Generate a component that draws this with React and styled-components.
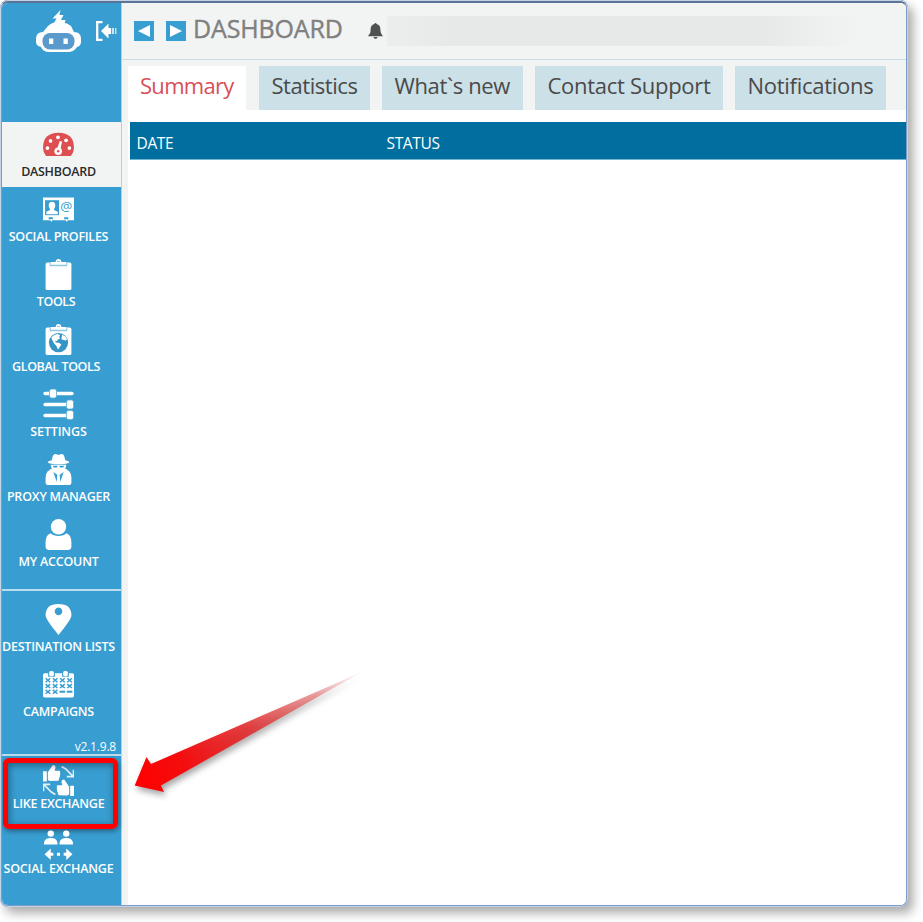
import styled, { createGlobalStyle } from "styled-components";

const GlobalStyle = createGlobalStyle`
  * {
    box-sizing: border-box;
  }
  body {
    margin: 0;
    min-height: 100vh;
    background: #fff;
    font-family: "Open Sans", "Noto Sans", sans-serif;
  }
`;

const mainItems = [
  { label: "DASHBOARD", icon: <GaugeIcon />, active: true, spacing: -0.28 },
  { label: "SOCIAL PROFILES", icon: <ProfilesIcon />, spacing: -0.26 },
  { label: "TOOLS", icon: <ClipboardIcon />, shift: -5, spacing: -0.4 },
  { label: "GLOBAL TOOLS", icon: <GlobeBoardIcon />, shift: -5, spacing: -0.4 },
  { label: "SETTINGS", icon: <SlidersIcon />, spacing: -0.15 },
  { label: "PROXY MANAGER", icon: <SpyIcon />, spacing: -0.2 },
  { label: "MY ACCOUNT", icon: <UserIcon />, spacing: -0.2 },
];

const listItems = [
  { label: "DESTINATION LISTS", icon: <PinIcon />, spacing: -0.25 },
  { label: "CAMPAIGNS", icon: <CalendarIcon />, spacing: -0.25 },
];

const exchangeItems = [
  { label: "LIKE EXCHANGE", icon: <LikesIcon />, low: true, spacing: -0.25, marked: true },
  { label: "SOCIAL EXCHANGE", icon: <PeopleIcon />, low: true, spacing: -0.2 },
];

const tabs = [
  { label: "Summary", width: 118, gap: 13, active: true, spacing: -0.7 },
  { label: "Statistics", width: 111, gap: 12, spacing: -0.45 },
  { label: "What`s new", width: 141, gap: 12, spacing: -0.35 },
  { label: "Contact Support", width: 188, gap: 12, spacing: -0.28 },
  { label: "Notifications", width: 151, gap: 0, spacing: -0.28 },
];

function App() {
  return (
    <>
      <GlobalStyle />
      <Window>
        <Sidebar>
          <Brand>
            <RobotLogo />
            <CollapseIcon />
          </Brand>
          <NavGroup $height={469}>
            {mainItems.map((item) => (
              <NavItem key={item.label} {...item} />
            ))}
          </NavGroup>
          <NavGroup $height={165} $top={6}>
            {listItems.map((item) => (
              <NavItem key={item.label} {...item} />
            ))}
            <Version>v2.1.9.8</Version>
          </NavGroup>
          <NavGroup $last>
            {exchangeItems.map((item) => (
              <NavItem key={item.label} {...item} />
            ))}
          </NavGroup>
        </Sidebar>
        <Main>
          <Header>
            <ArrowButton>
              <svg width="20" height="20" viewBox="0 0 20 20">
                <path d="M4 10 16 4v12z" fill="#fff" />
              </svg>
            </ArrowButton>
            <ArrowButton>
              <svg width="20" height="20" viewBox="0 0 20 20">
                <path d="M16 10 4 4v12z" fill="#fff" />
              </svg>
            </ArrowButton>
            <Title>DASHBOARD</Title>
            <BellIcon />
            <BlurredLine />
          </Header>
          <Tabs>
            {tabs.map((tab) => (
              <Tab
                key={tab.label}
                $active={tab.active}
                $width={tab.width}
                $gap={tab.gap}
                $spacing={tab.spacing}
              >
                {tab.label}
              </Tab>
            ))}
          </Tabs>
          <Content>
            <TableHead>
              <span>DATE</span>
              <span>STATUS</span>
            </TableHead>
          </Content>
        </Main>
      </Window>
      <Pointer />
    </>
  );
}

export default App;

function NavItem({ label, icon, active, low, shift = 0, spacing, marked }) {
  return (
    <Item $active={active} $low={low}>
      <IconBox>{icon}</IconBox>
      <Label $shift={shift} $spacing={spacing}>
        {label}
      </Label>
      {marked && <Highlight />}
    </Item>
  );
}

function RobotLogo() {
  return (
    <svg width="46" height="43" viewBox="0 0 46 43">
      <path d="M24.500 0 16.500 8.500h4L17.500 14h11l1-4h-4.500l2.500-5h-4z" fill="#fff" />
      <path
        d="M12 16Q16 12.500 19 12.500h8q4 0 8 3.500l3 6q7 0 7 7v3q0 4-4 5-3 5-9 5H13q-6 0-8-5-5-1-5-5v-3q0-7 7-7z"
        fill="#fff"
      />
      <rect x="6.500" y="23" width="32" height="16.500" rx="7.500" fill="#5a99cc" />
      <rect x="13" y="28.500" width="4.300" height="5.500" fill="#fff" />
      <rect x="27.500" y="28.500" width="4.300" height="5.500" fill="#fff" />
    </svg>
  );
}

function CollapseIcon() {
  return (
    <svg width="21" height="20" viewBox="0 0 21 20">
      <path d="M6.500 1.200H1.200v17.600h5.300" stroke="#fff" strokeWidth="2.300" fill="none" />
      <path d="M5 10 12.500 2.500v4.500H15v6h-2.500v4.500z" fill="#fff" />
      <path d="M15.800 7h2.200v6h-2.200zM19 7h1.400v6H19z" fill="#fff" opacity=".75" />
    </svg>
  );
}

function BellIcon() {
  return (
    <Bell width="15" height="16" viewBox="0 0 15 16">
      <path
        d="M7.500 0q1 0 1.100 1.100 3.800 1 3.800 5.400 0 3.500 1 4.500t1.400 2.300H.2q.2-1.300 1.400-2.300t1-4.500q0-4.400 3.800-5.400Q6.500 0 7.500 0zM5.500 13.900h4q-.3 1.900-2 1.900t-2-1.900z"
        fill="#505050"
      />
    </Bell>
  );
}

function GaugeIcon() {
  return (
    <svg viewBox="0 0 30 30">
      <path d="M3 26.200Q0 22.500 0 18.300 0 3.600 15 3.600t15 14.700q0 4.200-3 7.900z" fill="#de4f52" />
      <g fill="#fff">
        <circle cx="4.300" cy="18.500" r="1.800" />
        <circle cx="7.300" cy="11.500" r="1.800" />
        <circle cx="14.500" cy="8" r="1.800" />
        <circle cx="22.300" cy="11" r="1.800" />
        <circle cx="25.500" cy="18.500" r="1.800" />
        <circle cx="14.700" cy="21.500" r="3.700" />
        <path d="m13.500 20 2.700-8.500 2.200.5-1.700 9z" />
      </g>
      <circle cx="14.700" cy="21.500" r="1.200" fill="#de4f52" />
    </svg>
  );
}

function ProfilesIcon() {
  return (
    <svg viewBox="0 0 30 30">
      <path d="M0 3.500h30v22h-6l-1 1.500-1-1.500H9l-1 1.500-1-1.500H0z" fill="#fff" />
      <rect x="2" y="6" width="13.500" height="14.500" fill="#389dd0" />
      <path
        d="M8.700 7.500q3.200 0 3.200 3.600 0 2-1.300 3.300v1.200l3.700 1.600v2.500H3.200v-2.500l3.600-1.600v-1.200q-1.300-1.300-1.300-3.300 0-3.600 3.200-3.600z"
        fill="#fff"
      />
      <path d="M5.500 23.500h4M20.500 23.500h4" stroke="#389dd0" strokeWidth="2" />
      <text x="16.800" y="16.500" fontFamily="Open Sans, sans-serif" fontSize="13" fill="#389dd0">
        @
      </text>
    </svg>
  );
}

function Board() {
  return (
    <>
      <rect x="2.500" y="3.500" width="25" height="26.500" rx="1.500" fill="#fff" />
      <path d="M6.500 3h17v4h-17z" fill="#8fc7e5" />
      <path d="M7.500 5.600V2.800h4.700Q12.400 0 15 0t2.800 2.800h4.700v2.800z" fill="#fff" />
      <path d="M13.500 1.800h3v1h-3z" fill="#8fc7e5" />
    </>
  );
}

function ClipboardIcon() {
  return (
    <svg viewBox="0 0 30 30">
      <Board />
    </svg>
  );
}

function GlobeBoardIcon() {
  return (
    <svg viewBox="0 0 30 30">
      <Board />
      <circle cx="15" cy="18" r="9.300" fill="#3594c6" />
      <path
        d="M8 13q2.500-3 6-3.300l2.500 1-.8 2 .8 1.300-2.300 1.200-.6 1.600-1.800-.5.500 1.500 3.200.4 2.300 2-1.800 2.300-1.500 2.300-1.500-3.600-2-2.200-1.800-3zM18.500 10.500l3.300 1.700 1.500 3-1.800.8-2.200-.8-1.500-.4.300-2z"
        fill="#fff"
      />
    </svg>
  );
}

function SlidersIcon() {
  return (
    <svg viewBox="0 0 31 31">
      <path d="M2 4.500h27M2 15.500h25M2 26.500h25" stroke="#fff" strokeWidth="3.400" strokeLinecap="round" />
      <g fill="#fff" stroke="#5aaed9" strokeWidth=".8">
        <rect x="6.500" y="0" width="7" height="9" rx="2" />
        <rect x="23.500" y="11" width="7" height="9" rx="2" />
        <rect x="23.500" y="21.500" width="7" height="9" rx="2" />
      </g>
    </svg>
  );
}

function SpyIcon() {
  return (
    <svg viewBox="0 0 30 30">
      <g fill="#fff">
        <path d="M8.500 6Q9.500 0 11.500 0q1.500 0 3.500 1 2-1 3.500-1 2 0 3 6 4 .8 4 2.300Q23.500 10 15 10T4.500 8.300Q4.500 6.800 8.500 6z" />
        <path d="M7.500 10.500h15q-.3 4.500-3.500 6h-8q-3.200-1.500-3.500-6z" />
        <path d="M7.500 14.500h15l3 2.500q2 2 2 6v4.500q0 2.500-3 2.500h-19q-3 0-3-2.500V23q0-4 2-6z" />
      </g>
      <path d="M9.500 11.300h4.800l-.8 1.700h-3zM15.700 11.300h4.800l-1 1.700h-3z" fill="#389dd0" />
      <path d="m10 17.500 3.300 9.500.5-7zM20 17.500 16.700 27l-.5-7z" fill="#389dd0" />
    </svg>
  );
}

function UserIcon() {
  return (
    <svg viewBox="0 0 30 30">
      <circle cx="15" cy="7.500" r="7.400" fill="#fff" />
      <path
        d="M7.500 13.800Q10 16.500 15 16.500t7.500-2.700q5 1.500 5 9v3.500Q27.500 30 24 30H6q-3.500 0-3.500-3.700v-3.500q0-7.500 5-9z"
        fill="#fff"
      />
    </svg>
  );
}

function PinIcon() {
  return (
    <svg viewBox="0 0 30 30">
      <path
        fillRule="evenodd"
        d="M15 0q12.500 0 12.500 11Q27.500 15 15 30 2.500 15 2.500 11 2.500 0 15 0zm0 3.500a3.700 3.700 0 1 0 .01 0z"
        fill="#fff"
      />
    </svg>
  );
}

function CalendarIcon() {
  const cells = [0, 1, 2, 3].flatMap((col) =>
    [0, 1, 2].map((row) => ({ col, row, x: 2.5 + col * 7, y: 9 + row * 5.6 }))
  );
  return (
    <svg viewBox="0 0 30 30">
      <rect x="0" y="4" width="30" height="23.500" rx="1.500" fill="#fff" />
      <path d="M5 3h6.500v4.500H5zM18.500 3H25v4.500h-6.500z" fill="#389dd0" />
      <rect x="6" y="2" width="4.500" height="5" rx="1.500" fill="#fff" />
      <rect x="19.500" y="2" width="4.500" height="5" rx="1.500" fill="#fff" />
      {cells.map(({ col, row, x, y }) =>
        row === 2 && col > 1 ? (
          <path key={`${col}-${row}`} d={`M${x - 0.5} ${y + 1.8}h5.500`} stroke="#389dd0" strokeWidth="2" />
        ) : (
          <path
            key={`${col}-${row}`}
            d={`M${x} ${y}l4.500 3.800M${x + 4.5} ${y}l-4.500 3.800`}
            stroke="#389dd0"
            strokeWidth="1.400"
          />
        )
      )}
    </svg>
  );
}

function LikesIcon() {
  return (
    <svg viewBox="0 0 30 30">
      <g fill="#fff">
        <path d="M0 6h3.700v10H0z" />
        <path d="M4.700 7 9.500 0q3 0 2.500 3l-.7 2.500H16q1.300 1 .4 2.300.8 1.200-.1 2.400.5 1.200-.6 2.200.3 1.500-1 2.800l-8 .3-2-1z" />
        <path d="M26.300 20H30v10h-3.700z" />
        <path d="M25.300 21 20.500 14q-3 0-2.500 3l.7 2.500H14q-1.300 1-.4 2.300-.8 1.200.1 2.400-.5 1.200.6 2.200-.3 1.500 1 2.800l8 .3 2-1z" />
      </g>
      <path
        d="m18 1.500 4 2.300 7 7.200M23 11.300h6.500V4.500M12 28.500l-4-2.300L1 19M7 18.700H.5v6.800"
        stroke="#fff"
        strokeWidth="1.600"
        fill="none"
        opacity=".85"
      />
    </svg>
  );
}

function PeopleIcon() {
  return (
    <svg viewBox="0 0 30 30">
      <g fill="#fff">
        <circle cx="7.500" cy="3.500" r="3.100" />
        <circle cx="22.500" cy="3.500" r="3.100" />
        <path d="M1 14v-2q1-4.200 6.500-4.200T14 12v2zM16 14v-2q1-4.200 6.500-4.200T29 12v2zM1.500 23.500l6-5.500v4H10v3H7.500v4zM28.500 23.500l-6-5.500v4H20v3h2.500v4zM13.500 22h3v3h-3z" />
      </g>
    </svg>
  );
}

function Pointer() {
  return (
    <PointerSvg width="250" height="140" viewBox="0 0 250 140">
      <defs>
        <linearGradient id="fade" gradientUnits="userSpaceOnUse" x1="15" y1="120" x2="240" y2="13">
          <stop offset="0" stopColor="#ff0000" />
          <stop offset=".2" stopColor="#f40d0e" />
          <stop offset=".5" stopColor="#e2292b" stopOpacity=".88" />
          <stop offset=".8" stopColor="#dd5050" stopOpacity=".55" />
          <stop offset="1" stopColor="#e08080" stopOpacity=".1" />
        </linearGradient>
      </defs>
      <path d="M14.700 125.500 26.500 97l4.500 7L241 12.500 41 125.500l3 6.500z" fill="url(#fade)" />
    </PointerSvg>
  );
}

const Window = styled.div`
  display: flex;
  width: 908px;
  height: 907px;
  border: 2px solid #7c9cc9;
  border-top: 3px solid #5a7397;
  border-radius: 8px;
  overflow: hidden;
  background: #fff;
  box-shadow: 5px 6px 11px rgba(0, 0, 0, 0.34);
  outline: 1px solid #c3d3e6;
  outline-offset: -1px;
`;

const Sidebar = styled.aside`
  display: flex;
  flex-direction: column;
  flex: none;
  width: 120px;
  background: #389dd0;
  border-right: 1px solid #a9d3ea;
`;

const Brand = styled.div`
  display: flex;
  align-items: flex-start;
  gap: 14px;
  height: 119px;
  padding: 7px 0 0 34px;
  > svg {
    flex: none;
  }
  > svg + svg {
    margin-top: 11px;
  }
`;

const NavGroup = styled.nav`
  height: ${({ $height }) => ($height ? `${$height}px` : "auto")};
  margin-top: ${({ $last }) => ($last ? -2 : 0)}px;
  padding-top: ${({ $top = 0 }) => $top}px;
  border-bottom: ${({ $last }) => ($last ? "none" : "2px solid #b9dcee")};
  flex: none;
`;

const Item = styled.div`
  position: relative;
  display: flex;
  flex-direction: column;
  align-items: center;
  gap: ${({ $low }) => ($low ? 0 : 4)}px;
  height: 65px;
  padding-top: ${({ $low }) => ($low ? 11 : 7)}px;
  padding-right: 6px;
  color: ${({ $active }) => ($active ? "#2b2b2b" : "#fff")};
  background: ${({ $active }) => ($active ? "#f2f4f4" : "transparent")};
`;

const IconBox = styled.div`
  height: 30px;
  svg {
    display: block;
    width: 31px;
    height: 31px;
  }
`;

const Label = styled.span`
  font-size: 12.5px;
  font-weight: 600;
  line-height: 17px;
  white-space: nowrap;
  letter-spacing: ${({ $spacing }) => $spacing}px;
  padding-right: ${({ $shift }) => -$shift}px;
`;

const Highlight = styled.div`
  position: absolute;
  left: 1px;
  top: 4px;
  width: 115px;
  height: 71px;
  border: 5px solid #fe0000;
  border-radius: 6px;
  box-shadow:
    1px 2px 5px rgba(0, 0, 0, 0.4),
    inset 1px 2px 7px rgba(0, 0, 0, 0.4);
`;

const Version = styled.div`
  padding: 12px 5px 0 0;
  font-size: 12px;
  line-height: 16px;
  letter-spacing: -0.2px;
  text-align: right;
  color: #fff;
`;

const Main = styled.main`
  display: flex;
  flex-direction: column;
  flex: 1;
  background: #f2f4f4;
`;

const Header = styled.header`
  display: flex;
  align-items: center;
  height: 57px;
  padding: 0 0 1px 12px;
  border-bottom: 1px solid #c8dfea;
`;

const ArrowButton = styled.button`
  width: 20px;
  height: 20px;
  margin-right: 12px;
  padding: 0;
  border: none;
  background: #389dd0;
  svg {
    display: block;
  }
`;

const Title = styled.h1`
  flex: none;
  width: 175px;
  margin: -5px 0 0 -5px;
  font-size: 25px;
  font-weight: 400;
  line-height: 34px;
  letter-spacing: -0.15px;
  color: #808080;
  -webkit-text-stroke: 0.4px #808080;
`;

const Bell = styled.svg`
  flex: none;
  margin-right: 4px;
`;

const BlurredLine = styled.div`
  width: 470px;
  height: 30px;
  background: linear-gradient(90deg, #eceeee, #e7e9e9 15%, #e7e9e9 80%, #f2f4f4);
`;

const Tabs = styled.div`
  display: flex;
  height: 50px;
  padding: 6px 0 0 6px;
`;

const Tab = styled.div`
  width: ${({ $width }) => $width}px;
  height: 44px;
  margin-right: ${({ $gap }) => $gap}px;
  padding-left: ${({ $active }) => ($active ? 12 : 12.5)}px;
  font-size: 22px;
  line-height: 39px;
  white-space: nowrap;
  letter-spacing: ${({ $spacing }) => $spacing}px;
  color: ${({ $active }) => ($active ? "#d94f59" : "#4a4a4a")};
  background: ${({ $active }) => ($active ? "#fff" : "#cbe0e7")};
`;

const Content = styled.section`
  flex: 1;
  margin-left: 6px;
  padding: 12px 0 0 2px;
  background: #fff;
`;

const TableHead = styled.div`
  display: grid;
  grid-template-columns: 250px 1fr;
  align-items: center;
  height: 38px;
  padding: 5px 0 0 6.5px;
  font-size: 15.5px;
  letter-spacing: -0.35px;
  color: #fff;
  background: #006f9f;
  border-bottom: 1px solid #72b5d2;
`;

const PointerSvg = styled.svg`
  position: absolute;
  left: 120px;
  top: 660px;
  filter: drop-shadow(2px 4px 3px rgba(0, 0, 0, 0.35));
`;
